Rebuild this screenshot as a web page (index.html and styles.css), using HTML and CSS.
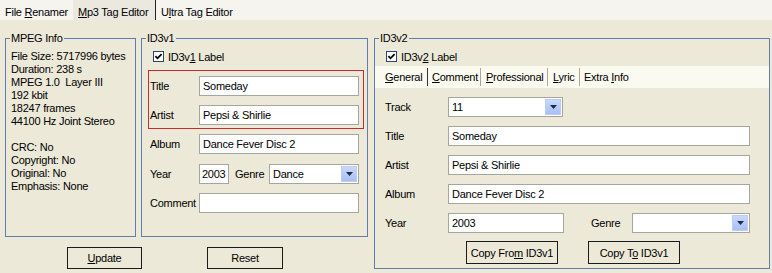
FILE: index.html
```html
<!DOCTYPE html>
<html>
<head>
  <meta charset="utf-8">
  <title>Mp3 Tag Editor</title>
  <link rel="stylesheet" href="styles.css">
</head>
<body>
  <div class="topbar">
    <span class="toptab renamer">File <u>R</u>enamer</span>
    <span class="toptab mp3"><u>M</u>p3 Tag Editor</span>
    <span class="toptab">U<u>l</u>tra Tag Editor</span>
  </div>

  <div class="main">
    <div class="leftside">
      <div class="groups">
        <fieldset class="group mpeg">
          <legend>MPEG Info</legend>
          <div class="info">
            <div>File Size: 5717996 bytes</div>
            <div>Duration: 238 s</div>
            <div>MPEG 1.0&nbsp; Layer III</div>
            <div>192 kbit</div>
            <div>18247 frames</div>
            <div>44100 Hz Joint Stereo</div>
            <div class="blank"></div>
            <div>CRC: No</div>
            <div>Copyright: No</div>
            <div>Original: No</div>
            <div>Emphasis: None</div>
          </div>
        </fieldset>

        <fieldset class="group id3v1">
          <legend>ID3v1</legend>
          <div class="checkrow">
            <svg class="check" width="11" height="11" viewBox="0 0 11 11"><rect x="0.5" y="0.5" width="10" height="10" fill="#fff" stroke="#2c4668"/><path d="M2.4 5.2l2.1 2.1 4.1-4.2" fill="none" stroke="#000" stroke-width="1.8"/></svg>
            <span>ID3v<u>1</u> Label</span>
          </div>
          <div class="redbox">
            <div class="row">
              <span class="lbl">Title</span>
              <div class="field wide1">Someday</div>
            </div>
            <div class="row">
              <span class="lbl">Artist</span>
              <div class="field wide1">Pepsi &amp; Shirlie</div>
            </div>
          </div>
          <div class="row plain album1">
            <span class="lbl">Album</span>
            <div class="field wide1">Dance Fever Disc 2</div>
          </div>
          <div class="row plain year1">
            <span class="lbl">Year</span>
            <div class="field short1">2003</div>
            <span class="genre1">Genre</span>
            <div class="combo genrebox1">
              <span class="value">Dance</span>
              <span class="drop"><svg width="7" height="4" viewBox="0 0 7 4"><path d="M0 0h7l-3.5 4z" fill="#1c2b4d"/></svg></span>
            </div>
          </div>
          <div class="row plain comment1">
            <span class="lbl">Comment</span>
            <div class="field wide1"></div>
          </div>
        </fieldset>
      </div>

      <div class="buttons">
        <button class="btn update"><u>U</u>pdate</button>
        <button class="btn reset">Reset</button>
      </div>
    </div>

    <fieldset class="group id3v2">
      <legend>ID3v2</legend>
      <div class="checkrow">
        <svg class="check" width="11" height="11" viewBox="0 0 11 11"><rect x="0.5" y="0.5" width="10" height="10" fill="#fff" stroke="#2c4668"/><path d="M2.4 5.2l2.1 2.1 4.1-4.2" fill="none" stroke="#000" stroke-width="1.8"/></svg>
        <span>ID3v<u>2</u> Label</span>
      </div>
      <div class="tabstrip">
        <span class="v2tab general"><u>G</u>eneral</span>
        <span class="v2tab comment"><u>C</u>omment</span>
        <span class="v2tab professional"><u>P</u>rofessional</span>
        <span class="v2tab lyric"><u>L</u>yric</span>
        <span class="v2tab extra">Extra <u>I</u>nfo</span>
      </div>
      <div class="v2rows">
        <div class="row">
          <span class="lbl2">Track</span>
          <div class="combo trackbox">
            <span class="value">11</span>
            <span class="drop"><svg width="7" height="4" viewBox="0 0 7 4"><path d="M0 0h7l-3.5 4z" fill="#1c2b4d"/></svg></span>
          </div>
        </div>
        <div class="row">
          <span class="lbl2">Title</span>
          <div class="field wide2">Someday</div>
        </div>
        <div class="row">
          <span class="lbl2">Artist</span>
          <div class="field wide2">Pepsi &amp; Shirlie</div>
        </div>
        <div class="row">
          <span class="lbl2">Album</span>
          <div class="field wide2">Dance Fever Disc 2</div>
        </div>
        <div class="row">
          <span class="lbl2">Year</span>
          <div class="field short2">2003</div>
          <span class="genre2">Genre</span>
          <div class="combo genrebox2">
            <span class="value"></span>
            <span class="drop"><svg width="7" height="4" viewBox="0 0 7 4"><path d="M0 0h7l-3.5 4z" fill="#1c2b4d"/></svg></span>
          </div>
        </div>
      </div>
      <div class="copybuttons">
        <button class="btn copy">Copy Fro<u>m</u> ID3v1</button>
        <button class="btn copy">Copy T<u>o</u> ID3v1</button>
      </div>
    </fieldset>
  </div>
</body>
</html>
```

FILE: styles.css
```css
body {
  margin: 0;
  background: #ece9d8;
  font-family: "Liberation Sans", Arial, sans-serif;
  font-size: 11px;
  letter-spacing: -0.25px;
  color: #000;
}

/* top page tabs */
.topbar {
  display: flex;
  height: 20px;
  background: #f5f4ef;
}

.toptab {
  box-sizing: border-box;
  height: 20px;
  padding: 6px 0 0 5px;
  line-height: 13px;
}

.renamer {
  width: 73px;
}

.mp3 {
  width: 83px;
  background: #ebe9df;
  border-right: 1px solid #222;
}

/* layout */
.main {
  display: flex;
  align-items: flex-start;
  gap: 6px;
  margin-top: 12px;
  padding-left: 5px;
}

.leftside {
  display: flex;
  flex-direction: column;
}

.groups {
  display: flex;
  gap: 5px;
  height: 205px;
}

.group {
  box-sizing: border-box;
  margin: 0;
  padding: 0;
  min-width: 0;
  border: 1px solid #5f80ad;
}

.group legend {
  margin-left: 4px;
  padding: 0 1px;
  line-height: 13px;
}

.mpeg {
  width: 131px;
}

.id3v1 {
  width: 227px;
}

.id3v2 {
  width: 396px;
  height: 237px;
}

/* mpeg info */
.info {
  margin: 5px 0 0 5px;
  line-height: 13px;
  white-space: nowrap;
}

.blank {
  height: 13px;
}

/* checkbox rows */
.checkrow {
  display: flex;
  align-items: center;
  gap: 4px;
  height: 13px;
  margin-top: 5px;
  padding-left: 11px;
}

.check {
  display: block;
}

/* rows and fields */
.row {
  display: flex;
  align-items: center;
  height: 20px;
}

.row + .row {
  margin-top: 9px;
}

.redbox {
  box-sizing: border-box;
  width: 216px;
  margin: 7px 0 0 6px;
  padding: 5px 0 3px 1px;
  border: 1px solid #cc2b2b;
}

.lbl {
  width: 49px;
}

.plain {
  margin-left: 6px;
  padding-left: 2px;
}

.album1 {
  margin-top: 5px;
}

.row.year1 {
  margin-top: 10px;
}

.field {
  box-sizing: border-box;
  height: 20px;
  padding-left: 3px;
  line-height: 18px;
  background: #fff;
  border: 1px solid #a7a69e;
  white-space: nowrap;
  overflow: hidden;
}

.wide1 {
  width: 160px;
}

.short1 {
  width: 30px;
  padding-left: 2px;
}

.genre1 {
  width: 34px;
  margin-left: 6px;
}

/* combo boxes */
.combo {
  box-sizing: border-box;
  display: flex;
  justify-content: space-between;
  height: 20px;
  padding: 1px;
  background: #fff;
  border: 1px solid #a7a69e;
}

.combo .value {
  padding-left: 2px;
  line-height: 16px;
}

.drop {
  box-sizing: border-box;
  display: flex;
  align-items: center;
  justify-content: center;
  width: 16px;
  height: 16px;
  background: linear-gradient(#c9d8fb, #a7bff2);
  border: 1px solid #bccdf5;
}

.genrebox1 {
  width: 90px;
}

/* ID3v2 tab strip */
.tabstrip {
  display: flex;
  align-items: center;
  height: 22px;
  margin-top: 3px;
  padding-left: 5px;
  background: #fbfaf0;
}

.v2tab {
  box-sizing: border-box;
  height: 18px;
  padding-left: 5px;
  line-height: 18px;
  border-right: 1px solid #aca899;
}

.general {
  width: 48px;
  border-right: 1px solid #333;
}

.comment {
  width: 53px;
  padding-left: 4px;
}

.professional {
  width: 67px;
}

.lyric {
  width: 32px;
}

.extra {
  padding-left: 4px;
  border-right: none;
}

.v2rows {
  margin-top: 9px;
  padding-left: 10px;
}

.lbl2 {
  width: 63px;
}

.trackbox {
  width: 115px;
}

.wide2 {
  width: 302px;
}

.short2 {
  width: 116px;
}

.genre2 {
  width: 41px;
  margin-left: 27px;
}

.genrebox2 {
  width: 118px;
}

/* buttons */
.btn {
  box-sizing: border-box;
  height: 22px;
  padding: 0;
  font: inherit;
  letter-spacing: inherit;
  color: #000;
  background: #ece9d8;
  border: 1px solid #1b1b1b;
}

.buttons {
  display: flex;
  gap: 65px;
  margin-top: 10px;
  padding-left: 62px;
}

.update {
  width: 75px;
}

.reset {
  width: 76px;
}

.copybuttons {
  display: flex;
  gap: 30px;
  margin-top: 8px;
  padding-left: 91px;
}

.copy {
  width: 92px;
  height: 23px;
}
```
